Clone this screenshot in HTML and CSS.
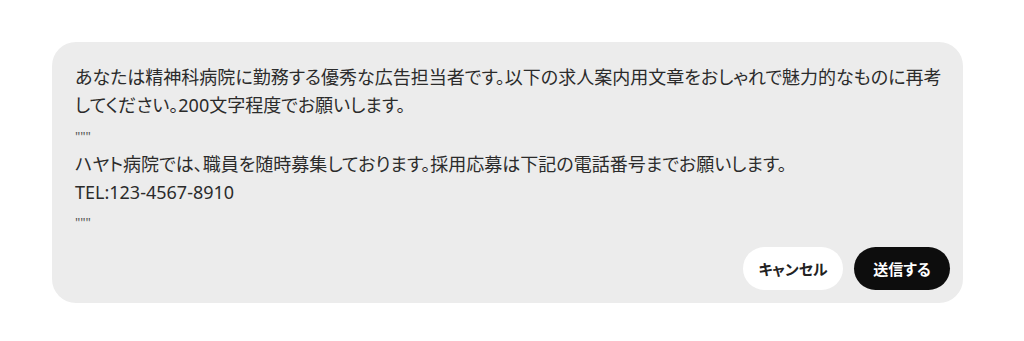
FILE: index.html
```html
<!DOCTYPE html>
<html lang="ja">
<head>
    <meta charset="UTF-8">
    <meta name="viewport" content="width=device-width, initial-scale=1.0">
    <title>メッセージ編集</title>
    <link rel="stylesheet" href="styles.css">
</head>
<body>
    <div class="edit-box">
        <div class="edit-text">あなたは精神科病院に勤務する優秀な広告担当者です。以下の求人案内用文章をおしゃれで魅力的なものに再考
してください。200文字程度でお願いします。
<span class="quotes">"""</span>
ハヤト病院では、職員を随時募集しております。採用応募は下記の電話番号までお願いします。
TEL:123-4567-8910
<span class="quotes">"""</span></div>
        <div class="edit-actions">
            <button class="btn btn-cancel">キャンセル</button>
            <button class="btn btn-send">送信する</button>
        </div>
    </div>
</body>
</html>
```

FILE: styles.css
```css
* {
    margin: 0;
    padding: 0;
    box-sizing: border-box;
}

body {
    font-family: "Noto Sans", "Noto Sans CJK JP", sans-serif;
    background: #fff;
    color: #2b2b2b;
}

.edit-box {
    margin: 42px 0 0 52px;
    width: 911px;
    background: #ececec;
    border-radius: 24px;
    padding: 21px 13px 13px 23px;
}

.edit-text {
    white-space: pre-wrap;
    font-size: 18px;
    line-height: 28.3px;
    font-feature-settings: "palt";
}

.quotes {
    font-size: 13px;
    color: #555;
}

.edit-actions {
    display: flex;
    justify-content: flex-end;
    gap: 11px;
    margin-top: 10px;
}

.btn {
    font-family: "Noto Sans CJK JP", sans-serif;
    font-size: 15px;
    font-weight: 700;
    height: 43px;
    padding: 0;
    border: none;
    border-radius: 999px;
    white-space: nowrap;
    font-feature-settings: "palt";
    cursor: pointer;
}

.btn-cancel {
    background: #fff;
    color: #222;
    width: 100px;
}

.btn-send {
    background: #0d0d0d;
    color: #fff;
    width: 96px;
}
```
